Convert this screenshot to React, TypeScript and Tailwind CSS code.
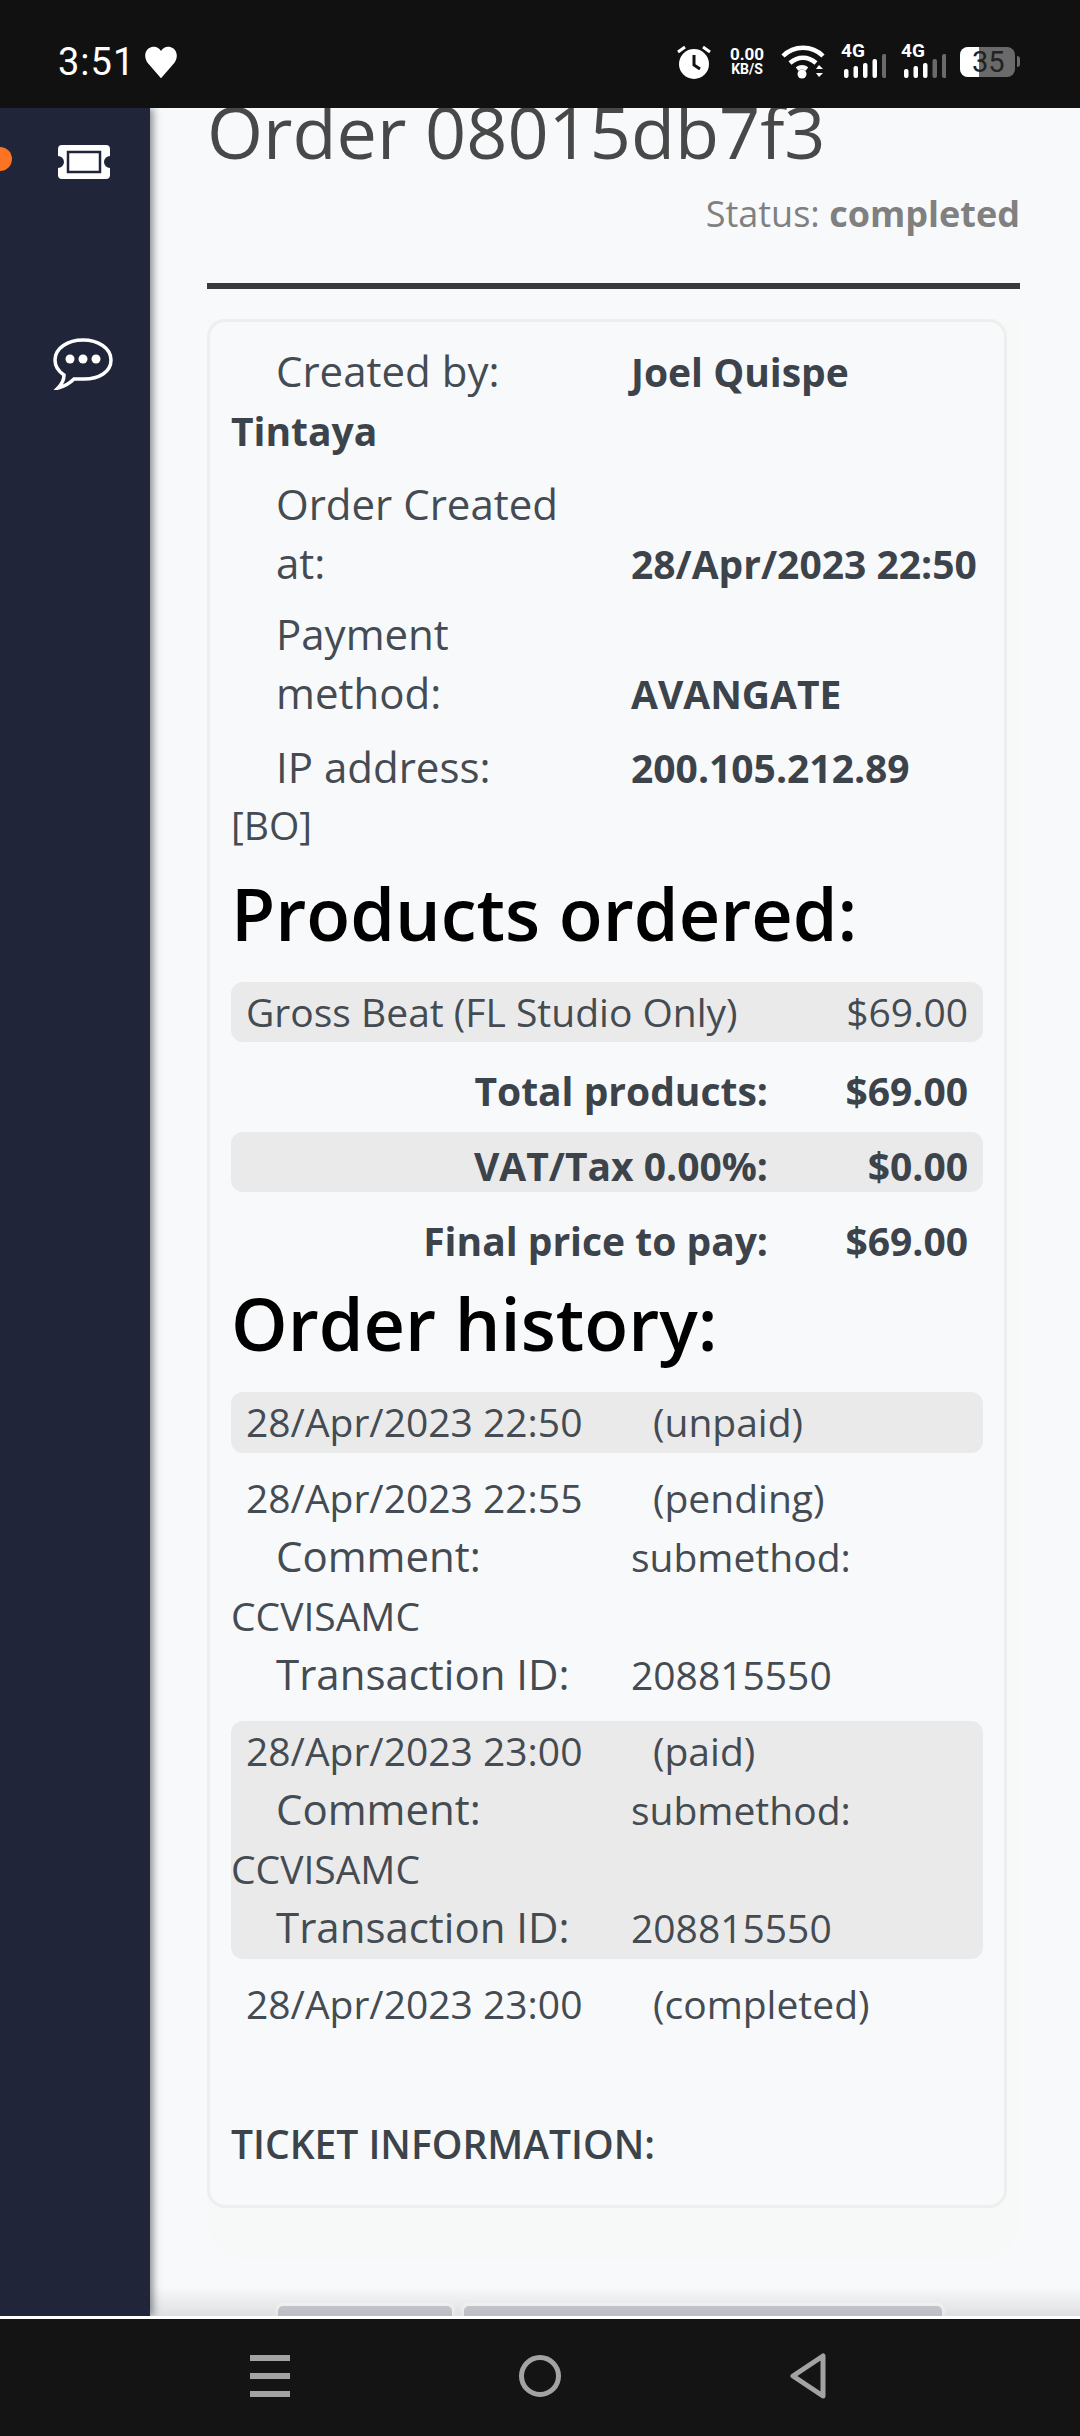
import React from "react";

const font = "font-['Open_Sans',sans-serif]";

const Info = ({ label, value, bold, className = "" }: { label: string; value: string; bold?: boolean; className?: string }) => (
  <div className={className}>
    <span className="inline-block w-[400px] pl-[45px] pr-[40px] text-[42px]">{label}</span>
    {bold ? <b className="font-bold text-[#3c434a]">{value}</b> : value}
  </div>
);

const TotalRow = ({ label, amount, shaded }: { label: string; amount: string; shaded?: boolean }) => (
  <div className={`flex mb-[15px] h-[60px] items-center rounded-[12px] pt-[9px] pr-[15px] font-bold text-[#3c434a] ${shaded ? "bg-[#eaeaea]" : ""}`}>
    <span className="w-[537px] text-right">{label}</span>
    <span className="flex-1 text-right">{amount}</span>
  </div>
);

const HistoryRow = ({ date, status, shaded, comment }: { date: string; status: string; shaded?: boolean; comment?: boolean }) => (
  <div className={`mb-[15px] rounded-[12px] py-[1px] ${shaded ? "bg-[#eaeaea]" : ""}`}>
    <div className="flex pl-[15px]">
      <span className="w-[407px]">{date}</span>
      <span>{status}</span>
    </div>
    {comment && (
      <>
        <Info label="Comment:" value="submethod: CCVISAMC" />
        <Info label="Transaction ID:" value="208815550" />
      </>
    )}
  </div>
);

const Signal = ({ className, dim }: { className: string; dim: number }) => (
  <div className={`relative h-[34px] w-[45px] ${className}`}>
    <span className="absolute left-0 top-[-4px] font-['Roboto',sans-serif] text-[19px] font-bold leading-[20px]">4G</span>
    <svg width="45" height="34" viewBox="0 0 45 34" className="absolute left-0 top-0">
      {[9, 12, 15, 19, 24].map((h, i) => (
        <rect key={i} x={3 + i * 9.5} y={33 - h} width="4.5" height={h} rx="2" fill={i >= 5 - dim ? "#6a6a6a" : "#fff"} />
      ))}
    </svg>
  </div>
);

const StatusIcons = () => (
  <div className="flex items-center text-white">
    <svg width="36" height="36" viewBox="0 0 36 36" className="mr-[14px]">
      <circle cx="18" cy="20" r="15" fill="#fff" />
      <path d="M18 11v10l6 4" stroke="#111" strokeWidth="3" fill="none" />
      <path d="M2 8l7-5M34 8l-7-5" stroke="#fff" strokeWidth="3" />
    </svg>
    <div className="w-[42px] mr-[13px] text-center font-['Roboto',sans-serif] font-bold leading-[15px]">
      <div className="text-[17px]">0.00</div>
      <div className="text-[14px]">KB/S</div>
    </div>
    <svg width="44" height="34" viewBox="0 0 44 34" className="mr-[16px]">
      <path d="M2 11C13 0 31 0 42 11M9 18c8-7 18-7 26 0M16 24c3-2 7-2 10 0" stroke="#fff" strokeWidth="4.500" fill="none" />
      <circle cx="21" cy="29" r="4.500" fill="#fff" />
      <path d="M35 24l3-4 4 4zM35 28l3 4 4-4z" fill="#fff" />
    </svg>
    <Signal className="mr-[15px]" dim={1} />
    <Signal className="mr-[14px]" dim={2} />
    <div className="relative h-[30px] w-[55px] rounded-[8px] bg-[#6a6a6a] overflow-hidden">
      <div className="h-full w-[19px] bg-white" />
      <span className="absolute left-[12px] top-[-4px] font-['Roboto',sans-serif] text-[29px] leading-[38px] text-[#222]">35</span>
    </div>
    <div className="ml-[2px] h-[11px] w-[3px] rounded-r bg-[#6a6a6a]" />
  </div>
);

export default function App() {
  return (
    <div className={`flex h-[2436px] w-[1080px] flex-col overflow-hidden bg-white ${font}`}>
      <div className="flex h-[108px] shrink-0 items-center justify-between bg-[#111111] pl-[58px] pr-[60px] pt-[15px]">
        <div className="flex items-center text-white">
          <span className="font-['Roboto',sans-serif] text-[38px] leading-[44px] tracking-[1px]">3:51</span>
          <svg width="34" height="34" viewBox="0 0 24 24" className="ml-[9px]">
            <path d="M12 23.500 2.500 12.500C-.5 8.800.5 2 6.200 1.200c2.600-.3 4.600 1 5.800 3 1.200-2 3.200-3.300 5.800-3C23.500 2 24.500 8.800 21.500 12.500z" fill="#fff" />
          </svg>
        </div>
        <StatusIcons />
      </div>

      <div className="relative flex flex-1 overflow-hidden bg-[#f8f9fb]">
        <aside className="relative z-10 w-[150px] shrink-0 bg-[#20253a] pl-[53px] pt-[37px] shadow-[3px_0_8px_rgba(0,0,0,0.45)]">
          <div className="absolute left-[-12px] top-[39px] h-[24px] w-[24px] rounded-full bg-[#fb7423]" />
          <svg width="52" height="34" viewBox="0 0 52 34" className="ml-[5px]">
            <path d="M4 0h44a4 4 0 0 1 4 4v7a6 6 0 0 0 0 12v7a4 4 0 0 1-4 4H4a4 4 0 0 1-4-4v-7a6 6 0 0 0 0-12V4a4 4 0 0 1 4-4z" fill="#fff" />
            <rect x="10" y="7" width="32" height="20" fill="#fff" stroke="#20253a" strokeWidth="2.500" />
          </svg>
          <svg width="60" height="52" viewBox="0 0 60 52" className="mt-[159px]">
            <path d="M30 2c15 0 28 8 28 20S46 41 31 41c-4 0-7 0-10 0-3 3-8 7-16 9 3-3 6-7 6-13C5 33 2 28 2 22 2 10 15 2 30 2z" fill="none" stroke="#fff" strokeWidth="3.500" />
            <circle cx="17" cy="21" r="4.500" fill="#fff" />
            <circle cx="30" cy="21" r="4.500" fill="#fff" />
            <circle cx="43" cy="21" r="4.500" fill="#fff" />
          </svg>
        </aside>

        <main className="ml-[57px] w-[813px] text-[39px] leading-[58.5px] text-[#444b52]">
          <h1 className="mt-[-22px] text-[72px] font-normal leading-[90px] text-[#484848]">Order 08015db7f3</h1>
          <div className="mt-[11px] text-right text-[36px] leading-[54px] text-[#808080]">
            Status: <b className="font-bold">completed</b>
          </div>
          <div className="mt-[42px] h-[6px] bg-[#3a3a3a]" />
          <div className="mt-[30px] h-[1941px] rounded-b-[40px] bg-[#f7f8f8]">
            <div className="w-[800px] rounded-[18px] border-[3px] border-[#eeeeee] bg-[#f8f9fb] px-[21px] pb-[31px] pt-[20px]">
              <Info label="Created by:" value="Joel Quispe Tintaya" bold className="mb-[15px]" />
              <Info label="Order Created at:" value="28/Apr/2023 22:50" bold className="mb-[12px]" />
              <Info label="Payment method:" value="AVANGATE" bold className="mb-[15px]" />
              <Info label="IP address:" value="200.105.212.89" bold className="mb-[-2px]" />
              <div>[BO]</div>
              <h2 className="mt-[18px] mb-[28px] text-[72px] font-semibold leading-[82px] text-black">Products ordered:</h2>
              <div className="mb-[15px] flex h-[60px] items-center justify-between rounded-[12px] bg-[#eaeaea] px-[15px]">
                <span>Gross Beat (FL Studio Only)</span>
                <span>$69.00</span>
              </div>
              <TotalRow label="Total products:" amount="$69.00" />
              <TotalRow label="VAT/Tax 0.00%:" amount="$0.00" shaded />
              <TotalRow label="Final price to pay:" amount="$69.00" />
              <h2 className="mt-[3px] mb-[28px] text-[72px] font-semibold leading-[82px] text-black">Order history:</h2>
              <HistoryRow date="28/Apr/2023 22:50" status="(unpaid)" shaded />
              <HistoryRow date="28/Apr/2023 22:55" status="(pending)" comment />
              <HistoryRow date="28/Apr/2023 23:00" status="(paid)" shaded comment />
              <HistoryRow date="28/Apr/2023 23:00" status="(completed)" />
              <div className="mt-[81px] font-semibold text-[#3c434a]">TICKET INFORMATION:</div>
            </div>
          </div>
          <div className="ml-[68px] mt-[43px] flex gap-[6px]">
            <div className="h-[40px] w-[180px] rounded-t-[8px] border-[3px] border-[#ffffff] bg-[#d0d2d9]" />
            <div className="h-[40px] w-[484px] rounded-t-[8px] border-[3px] border-[#ffffff] bg-[#d0d2d9]" />
          </div>
        </main>
        <div className="absolute bottom-0 left-[150px] right-0 h-[30px] bg-gradient-to-b from-transparent to-black/10" />
      </div>

      <div className="flex h-[120px] shrink-0 items-center border-t-[3px] border-white bg-[#141414] pb-[4px]">
        <div className="flex w-full items-center pl-[250px]">
          <div className="flex h-[42px] w-[40px] flex-col justify-between">
            <div className="h-[6px] bg-[#a3a3a3]" />
            <div className="h-[6px] bg-[#a3a3a3]" />
            <div className="h-[6px] bg-[#a3a3a3]" />
          </div>
          <div className="ml-[229px] h-[42px] w-[42px] rounded-full border-[5px] border-[#a3a3a3]" />
          <svg width="36" height="46" viewBox="0 0 36 46" className="ml-[229px]">
            <path d="M33 3v40L3 23z" fill="none" stroke="#a3a3a3" strokeWidth="5" strokeLinejoin="round" />
          </svg>
        </div>
      </div>
    </div>
  );
}
